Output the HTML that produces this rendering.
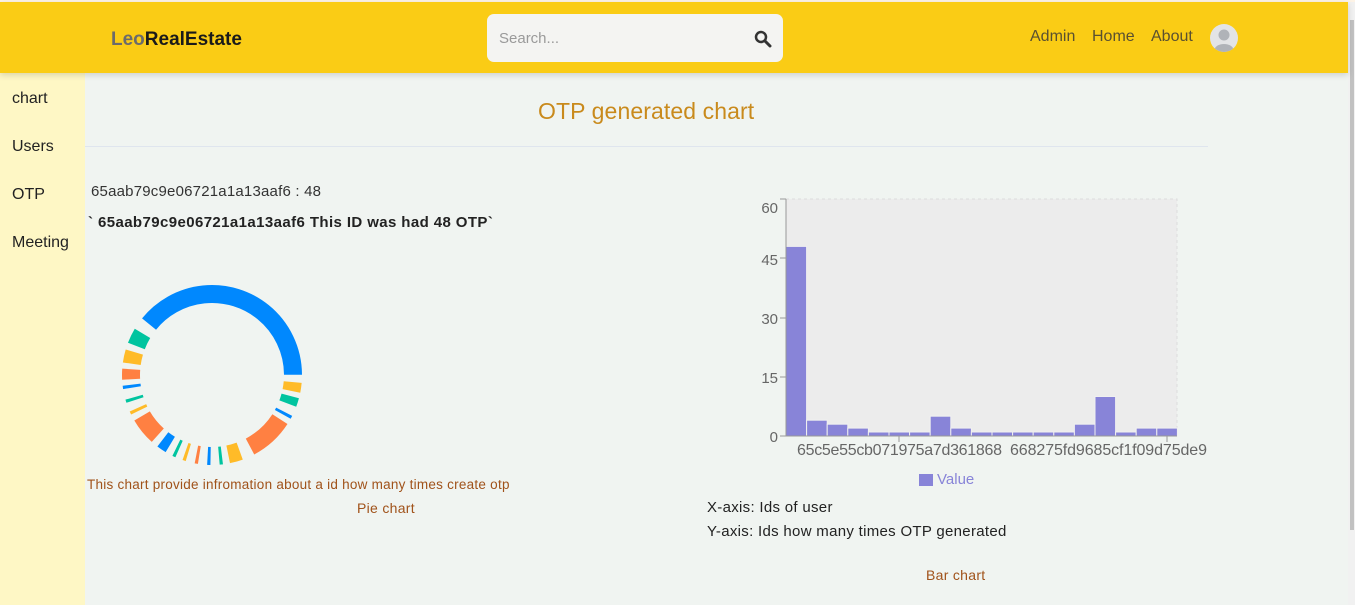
<!DOCTYPE html>
<html><head><meta charset="utf-8"><style>
*{margin:0;padding:0;box-sizing:border-box}
body{width:1355px;height:605px;overflow:hidden;background:#f0f4f1;font-family:"Liberation Sans",sans-serif;position:relative}
.hdr{position:absolute;left:0;top:2px;width:1348px;height:71px;background:#facc15;box-shadow:0 2px 6px rgba(0,0,0,.15);z-index:2}
.top{position:absolute;left:0;top:0;width:1355px;height:2px;background:#fdf3e6}
.logo{position:absolute;left:111px;top:27px;font-weight:bold;font-size:19px;color:#1a1a1a}
.logo span{color:#6b6b6b}
.search{position:absolute;left:487px;top:12px;width:296px;height:48px;background:#f4f4f2;border-radius:7px}
.search .ph{position:absolute;left:12px;top:16px;font-size:15px;color:#9a9a9a}
.nav{position:absolute;top:26px;font-size:16px;color:#5a5030}
.sb{position:absolute;left:0;top:73px;width:85px;height:532px;background:#fef7c5}
.sb div{position:absolute;left:12px;font-size:16px;color:#222}
.scroll{position:absolute;left:1348px;top:2px;width:7px;height:603px;background:#f1f1f1}
.scroll div{position:absolute;left:2px;top:18px;width:4px;height:510px;background:#c1c1c1}
.t{position:absolute;white-space:nowrap}
</style></head><body>
<div class="top"></div>
<div class="hdr">
<div class="logo"><span>Leo</span>RealEstate</div>
<div class="search"><div class="ph">Search...</div>
<svg style="position:absolute;left:267px;top:16px" width="18" height="18" viewBox="0 0 18 18"><circle cx="7" cy="7" r="5" fill="none" stroke="#333" stroke-width="2.5"/><line x1="11" y1="11" x2="16" y2="16" stroke="#333" stroke-width="3" stroke-linecap="round"/></svg></div>
<div class="nav" style="left:1030px">Admin</div>
<div class="nav" style="left:1092px">Home</div>
<div class="nav" style="left:1151px">About</div>
<svg style="position:absolute;left:1210px;top:22px" width="28" height="28" viewBox="0 0 28 28"><defs><clipPath id="c"><circle cx="14" cy="14" r="14"/></clipPath></defs><circle cx="14" cy="14" r="14" fill="#e3e4e6"/><g clip-path="url(#c)" fill="#b0b3b8"><circle cx="14" cy="11" r="5.5"/><ellipse cx="14" cy="27" rx="10" ry="7"/></g></svg>
</div>
<div class="scroll"><div></div></div>
<div class="sb">
<div style="top:17px">chart</div><div style="top:65px">Users</div><div style="top:113px">OTP</div><div style="top:161px">Meeting</div>
</div>
<div class="t" style="left:538px;top:98px;font-size:23px;color:#c98a1c;letter-spacing:0.1px">OTP generated chart</div>
<div style="position:absolute;left:85px;top:146px;width:1123px;height:1px;background:#dfe5ee"></div>
<div class="t" style="left:91px;top:183px;font-size:15px;color:#333;letter-spacing:0.2px">65aab79c9e06721a1a13aaf6 : 48</div>
<div class="t" style="left:88px;top:214px;font-size:15px;font-weight:bold;color:#222;letter-spacing:0.4px">` 65aab79c9e06721a1a13aaf6 This ID was had 48 OTP`</div>
<svg style="position:absolute;left:0;top:0" width="400" height="480">
<g fill="none" stroke-width="18" transform="translate(212 375)">
<circle r="81" stroke="#0088fe" stroke-dasharray="199 1000" transform="rotate(219)"/>
<circle r="81" stroke="#ffbb28" stroke-dasharray="9 1000" transform="rotate(5)"/>
<circle r="81" stroke="#00c49f" stroke-dasharray="8 1000" transform="rotate(15)"/>
<circle r="81" stroke="#0088fe" stroke-dasharray="3 1000" transform="rotate(27)"/>
<circle r="81" stroke="#ff8042" stroke-dasharray="41 1000" transform="rotate(33)"/>
<circle r="81" stroke="#ffbb28" stroke-dasharray="12 1000" transform="rotate(70)"/>
<circle r="81" stroke="#00c49f" stroke-dasharray="3 1000" transform="rotate(83)"/>
<circle r="81" stroke="#0088fe" stroke-dasharray="3 1000" transform="rotate(91)"/>
<circle r="81" stroke="#ff8042" stroke-dasharray="3 1000" transform="rotate(99)"/>
<circle r="81" stroke="#ffbb28" stroke-dasharray="3 1000" transform="rotate(107)"/>
<circle r="81" stroke="#00c49f" stroke-dasharray="3 1000" transform="rotate(114)"/>
<circle r="81" stroke="#0088fe" stroke-dasharray="9 1000" transform="rotate(121)"/>
<circle r="81" stroke="#ff8042" stroke-dasharray="25 1000" transform="rotate(132)"/>
<circle r="81" stroke="#ffbb28" stroke-dasharray="3 1000" transform="rotate(154)"/>
<circle r="81" stroke="#00c49f" stroke-dasharray="3 1000" transform="rotate(162)"/>
<circle r="81" stroke="#0088fe" stroke-dasharray="3 1000" transform="rotate(171)"/>
<circle r="81" stroke="#ff8042" stroke-dasharray="10 1000" transform="rotate(177)"/>
<circle r="81" stroke="#ffbb28" stroke-dasharray="12 1000" transform="rotate(188)"/>
<circle r="81" stroke="#00c49f" stroke-dasharray="14 1000" transform="rotate(201)"/>
</g></svg>
<div class="t" style="left:87px;top:477px;font-size:13.5px;color:#a0521a;letter-spacing:0.25px">This chart provide infromation about a id how many times create otp</div>
<div class="t" style="left:357px;top:500px;font-size:14px;color:#a0521a;letter-spacing:0.3px">Pie chart</div>
<svg style="position:absolute;left:740px;top:190px" width="480" height="300" font-family="Liberation Sans" font-size="15" fill="#666">
<rect x="46" y="9" width="391" height="237" fill="#ececec"/>
<rect x="46" y="9" width="391" height="237" fill="none" stroke="#ddd" stroke-dasharray="3 3"/>
<g fill="#8884d8" stroke="#f0f0f0" stroke-width="1">
<rect x="46" y="56.4" width="20.6" height="189.6"/>
<rect x="66.6" y="230.2" width="20.6" height="15.8"/>
<rect x="87.2" y="234.2" width="20.6" height="11.8"/>
<rect x="107.8" y="238.1" width="20.6" height="7.9"/>
<rect x="128.4" y="242" width="20.6" height="4"/>
<rect x="149" y="242" width="20.6" height="4"/>
<rect x="169.6" y="242" width="20.6" height="4"/>
<rect x="190.2" y="226.2" width="20.6" height="19.8"/>
<rect x="210.8" y="238.1" width="20.6" height="7.9"/>
<rect x="231.4" y="242" width="20.6" height="4"/>
<rect x="252" y="242" width="20.6" height="4"/>
<rect x="272.6" y="242" width="20.6" height="4"/>
<rect x="293.2" y="242" width="20.6" height="4"/>
<rect x="313.8" y="242" width="20.6" height="4"/>
<rect x="334.4" y="234.2" width="20.6" height="11.8"/>
<rect x="355" y="206.5" width="20.6" height="39.5"/>
<rect x="375.6" y="242" width="20.6" height="4"/>
<rect x="396.2" y="238.1" width="20.6" height="7.9"/>
<rect x="416.8" y="238.1" width="20.6" height="7.9"/>
</g>
<g stroke="#999"><line x1="46" y1="9" x2="46" y2="246"/><line x1="46" y1="246" x2="437" y2="246"/>
<line x1="40" y1="9" x2="46" y2="9"/><line x1="40" y1="68" x2="46" y2="68"/><line x1="40" y1="128" x2="46" y2="128"/><line x1="40" y1="187" x2="46" y2="187"/><line x1="40" y1="246" x2="46" y2="246"/>
<line x1="159" y1="246" x2="159" y2="252"/><line x1="427" y1="246" x2="427" y2="252"/></g>
<text x="38" y="23" text-anchor="end">60</text><text x="38" y="75" text-anchor="end">45</text><text x="38" y="134" text-anchor="end">30</text><text x="38" y="193" text-anchor="end">15</text><text x="38" y="252" text-anchor="end">0</text>
<text x="57" y="265" font-size="16" textLength="205">65c5e55cb071975a7d361868</text>
<text x="270" y="265" font-size="16" textLength="197">668275fd9685cf1f09d75de9</text>
<rect x="179" y="284" width="14" height="12" fill="#8884d8"/>
<text x="197" y="294" fill="#8884d8">Value</text>
</svg>
<div class="t" style="left:707px;top:499px;font-size:15px;color:#222;letter-spacing:0.3px">X-axis: Ids of user</div>
<div class="t" style="left:707px;top:523px;font-size:15px;color:#222;letter-spacing:0.3px">Y-axis: Ids how many times OTP generated</div>
<div class="t" style="left:926px;top:567px;font-size:14px;color:#a0521a;letter-spacing:0.3px">Bar chart</div>
</body></html>
